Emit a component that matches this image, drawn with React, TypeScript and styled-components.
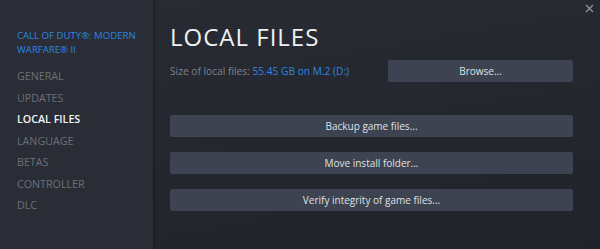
import React from 'react';
import styled, { createGlobalStyle } from 'styled-components';

const GlobalStyle = createGlobalStyle`
	html, body {
		margin: 0;
		padding: 0;
		background: #22252c;
	}
	* {
		box-sizing: border-box;
	}
`;

const Window = styled.div`
	width: 600px;
	height: 249px;
	display: flex;
	font-family: "Open Sans", "Liberation Sans", sans-serif;
	position: relative;
	overflow: hidden;
`;

const Sidebar = styled.nav`
	width: 153px;
	flex-shrink: 0;
	background: #2a2d35;
	padding: 29px 0 0 17px;
	box-shadow: 1px 0 3px rgba(0, 0, 0, 0.35);
	z-index: 1;
`;

const GameTitle = styled.div`
	color: #2f86e0;
	font-size: 9.6px;
	line-height: 14px;
	text-transform: uppercase;
	margin-bottom: 9px;
`;

const NavItem = styled.div<{ active?: boolean }>`
	color: ${props => props.active ? '#f1f3f5' : '#6c7078'};
	font-size: 10.7px;
	font-weight: ${props => props.active ? 600 : 400};
	line-height: 21.5px;
	text-transform: uppercase;
`;

const Content = styled.main`
	flex-grow: 1;
	background: linear-gradient(170deg, #282b33 0%, #23262d 60%, #202329 100%);
	padding: 21px 27px 0 17px;
	display: flex;
	flex-direction: column;
`;

const Heading = styled.h1`
	margin: 0;
	color: #eef0f2;
	font-size: 24px;
	font-weight: 400;
	letter-spacing: 1px;
	line-height: 32px;
`;

const SizeRow = styled.div`
	display: flex;
	align-items: center;
	justify-content: space-between;
	margin-top: 7px;
`;

const SizeLabel = styled.span`
	color: #7d838b;
	font-size: 10.2px;
`;

const SizeValue = styled.span`
	color: #2f86e0;
`;

const Button = styled.div<{ wide?: boolean }>`
	width: ${props => props.wide ? '100%' : '185px'};
	height: 22px;
	display: flex;
	align-items: center;
	justify-content: center;
	background: #3d4350;
	color: #dfe2e6;
	font-size: 10px;
	border-radius: 2px;
`;

const ButtonStack = styled.div`
	display: flex;
	flex-direction: column;
	gap: 15px;
	margin-top: 33px;
`;

const Close = styled.svg`
	position: absolute;
	top: 4px;
	right: 6px;
`;

const navItems = ['General', 'Updates', 'Local Files', 'Language', 'Betas', 'Controller', 'DLC'];

export default function App(): JSX.Element {
	return (
		<>
			<GlobalStyle />
			<Window>
				<Sidebar>
					<GameTitle>Call of Duty®: Modern Warfare® II</GameTitle>
					{navItems.map(item => (
						<NavItem key={item} active={item === 'Local Files'}>{item}</NavItem>
					))}
				</Sidebar>
				<Content>
					<Heading>LOCAL FILES</Heading>
					<SizeRow>
						<SizeLabel>
							Size of local files: <SizeValue>55.45 GB on M.2 (D:)</SizeValue>
						</SizeLabel>
						<Button>Browse...</Button>
					</SizeRow>
					<ButtonStack>
						<Button wide>Backup game files...</Button>
						<Button wide>Move install folder...</Button>
						<Button wide>Verify integrity of game files...</Button>
					</ButtonStack>
				</Content>
				<Close width="9" height="9" viewBox="0 0 9 9">
					<path d="M1 1 L8 8 M8 1 L1 8" stroke="#8b929a" strokeWidth="1.4" />
				</Close>
			</Window>
		</>
	);
}
